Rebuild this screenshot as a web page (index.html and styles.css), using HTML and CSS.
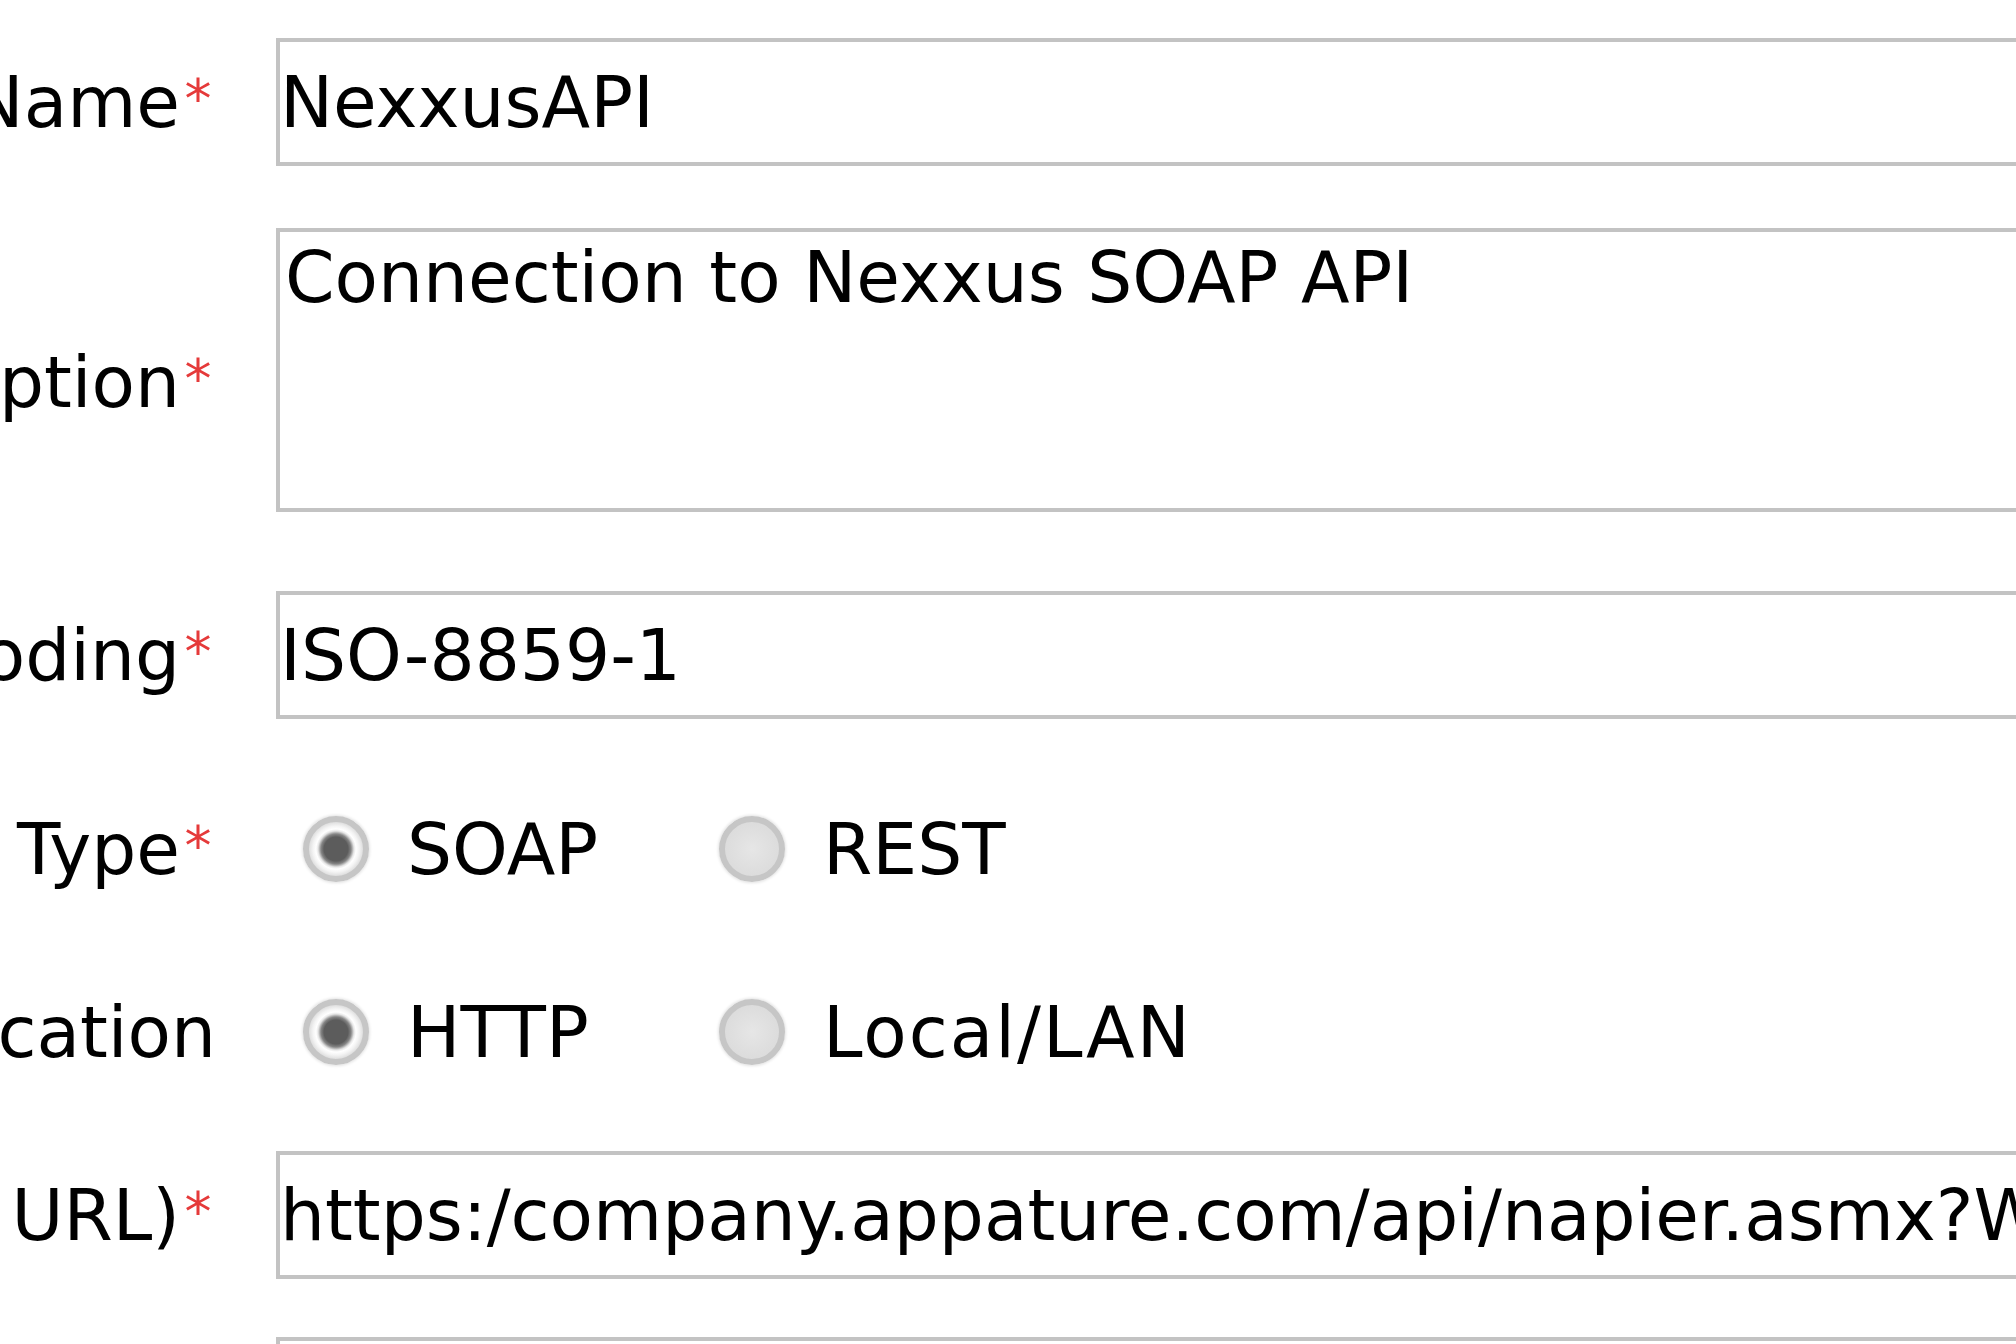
FILE: index.html
```html
<!DOCTYPE html>
<html lang="en">
<head>
<meta charset="utf-8">
<title>Connection settings</title>
<link rel="stylesheet" href="styles.css">
</head>
<body>
<div class="viewport">
<form class="form">
  <div class="row row-name">
    <div class="label"><span class="label-text">Connection Name<span class="req">*</span></span></div>
    <input class="input" type="text" value="NexxusAPI">
  </div>
  <div class="row row-desc">
    <div class="label label-desc"><span class="label-text">Description<span class="req">*</span></span></div>
    <textarea class="input textarea">Connection to Nexxus SOAP API</textarea>
  </div>
  <div class="row row-enc">
    <div class="label"><span class="label-text">Encoding<span class="req">*</span></span></div>
    <input class="input" type="text" value="ISO-8859-1">
  </div>
  <div class="row row-type">
    <div class="label"><span class="label-text">Service Type<span class="req">*</span></span></div>
    <div class="options">
      <label class="opt"><input class="radio" type="radio" name="type" checked><span>SOAP</span></label>
      <label class="opt"><input class="radio" type="radio" name="type"><span>REST</span></label>
    </div>
  </div>
  <div class="row row-loc">
    <div class="label"><span class="label-text">Communication</span></div>
    <div class="options">
      <label class="opt"><input class="radio" type="radio" name="loc" checked><span>HTTP</span></label>
      <label class="opt"><input class="radio" type="radio" name="loc"><span class="wide">Local/LAN</span></label>
    </div>
  </div>
  <div class="row row-url">
    <div class="label"><span class="label-text">Service (HTTP URL)<span class="req">*</span></span></div>
    <input class="input" type="text" value="https:/company.appature.com/api/napier.asmx?WSDL">
  </div>
  <div class="row row-next">
    <div class="label"><span class="label-text">Username<span class="req">*</span></span></div>
    <input class="input" type="text" value="">
  </div>
</form>
</div>
</body>
</html>
```

FILE: styles.css
```css
html, body {
  margin: 0;
  padding: 0;
}

body {
  background: #ffffff;
  color: #000000;
  font-family: "DejaVu Sans", "Liberation Sans", sans-serif;
  font-size: 71px;
}

.viewport {
  width: 2016px;
  height: 1344px;
  overflow: hidden;
}

.form {
  display: flex;
  flex-direction: column;
  padding-top: 38px;
  margin: 0;
}

.row {
  display: flex;
  align-items: center;
  height: 128px;
  flex: none;
}

.row-desc { margin-top: 62px; height: 284px; }
.row-enc { margin-top: 79px; }
.row-type { margin-top: 66px; }
.row-loc { margin-top: 55px; }
.row-url { margin-top: 55px; }
.row-next { margin-top: 58px; align-items: flex-start; }

.label {
  width: 216px;
  flex: none;
  margin-right: 60px;
  display: flex;
  justify-content: flex-end;
  overflow: hidden;
  white-space: nowrap;
}

.label-desc { padding-top: 24px; }

.label-text {
  flex: none;
  white-space: nowrap;
}

.req {
  display: inline-block;
  width: 36px;
  text-align: center;
  color: #e53a3a;
  font-size: 54px;
  vertical-align: 10px;
  line-height: 1;
}

.input {
  box-sizing: border-box;
  width: 1800px;
  height: 128px;
  margin: 0;
  padding: 0;
  border: 4px solid #c3c3c3;
  border-radius: 0;
  background: #ffffff;
  color: #000000;
  font-family: inherit;
  font-size: 71px;
  outline: none;
  flex: none;
}

.textarea {
  height: 284px;
  padding: 4px 5px;
  resize: none;
  overflow: hidden;
  line-height: normal;
}

.options {
  display: flex;
  align-items: center;
}

.opt {
  display: flex;
  align-items: center;
  width: 416px;
}

.wide {
  letter-spacing: 2px;
}

.radio {
  appearance: none;
  -webkit-appearance: none;
  box-sizing: border-box;
  width: 66px;
  height: 66px;
  margin: 0 38px 0 27px;
  border-radius: 50%;
  border: 6px solid #c6c6c6;
  box-shadow: 0 0 3px 1px #e2e2e2;
  background: radial-gradient(circle closest-side, #e6e6e6 0, #dcdcdc 100%);
  flex: none;
}

.radio:checked {
  background: radial-gradient(circle closest-side,
    #5c5c5c 0, #5c5c5c 12px, #858585 15px, #e6e6e6 18px,
    #ffffff 20px, #f4f4f4 23px, #dedede 27px);
}
```
